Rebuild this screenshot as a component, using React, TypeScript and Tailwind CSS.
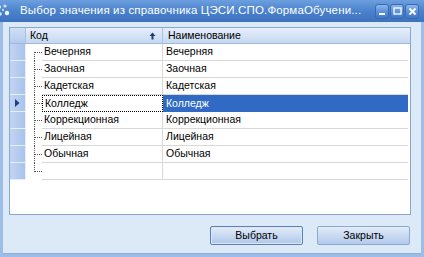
import React from "react";

const rows = [
  "Вечерняя",
  "Заочная",
  "Кадетская",
  "Колледж",
  "Коррекционная",
  "Лицейная",
  "Обычная",
  "",
];

const SELECTED = 3;

function TitleIcon() {
  return (
    <svg width="16" height="16" viewBox="0 0 16 16" className="shrink-0">
      <circle cx="3" cy="4" r="2" fill="#e8f2ff" />
      <circle cx="9" cy="3" r="1.6" fill="#cfe2fb" />
      <circle cx="4" cy="11" r="1.8" fill="#d9e9fd" />
      <circle cx="11" cy="10" r="2.2" fill="#f3f8ff" />
      <circle cx="7" cy="7" r="1.2" fill="#b9d3f5" />
    </svg>
  );
}

function WinButton({ kind }: { kind: "min" | "max" | "close" }) {
  return (
    <div className="flex h-[15px] w-[14px] items-center justify-center rounded-[3px] border border-[#3a69b0] bg-gradient-to-b from-[#8cb7ec] via-[#5d93db] to-[#3f76c6]">
      <svg width="9" height="9" viewBox="0 0 9 9">
        {kind === "min" && <rect x="1" y="6" width="6" height="2" fill="#fff" />}
        {kind === "max" && (
          <rect x="1" y="1" width="7" height="6" fill="none" stroke="#fff" strokeWidth="1.3" />
        )}
        {kind === "close" && (
          <path d="M1.5 1.5 L7.5 7.5 M7.5 1.5 L1.5 7.5" stroke="#fff" strokeWidth="1.8" />
        )}
      </svg>
    </div>
  );
}

export default function App() {
  return (
    <div
      className="flex h-[257px] w-[424px] flex-col overflow-hidden bg-[#2f5e9f] text-[10.5px] text-black"
      style={{ fontFamily: "'Liberation Sans', Arial, sans-serif" }}
    >
      {/* title bar */}
      <div className="flex h-[22px] items-center bg-gradient-to-b from-[#6d9fe0] via-[#4b82cc] to-[#3c72bf] pr-[5px]">
        <div className="-ml-[4px] mr-[8px]">
          <TitleIcon />
        </div>
        <div className="min-w-0 flex-1 whitespace-nowrap text-[11.5px] tracking-[0.15px] text-white">
          Выбор значения из справочника ЦЭСИ.СПО.ФормаОбучени...
        </div>
        <div className="ml-[4px] flex gap-[1px]">
          <WinButton kind="min" />
          <WinButton kind="max" />
          <WinButton kind="close" />
        </div>
      </div>

      {/* body */}
      <div className="flex flex-1 flex-col border-l-[3px] border-r-[3px] border-b-[3px] border-[#9dbde6] bg-[#dce9f7]">
        <div className="flex flex-1 flex-col border-b border-[#8fb0dc] pl-[6px] pr-[10px] pt-[5px]">
          {/* grid */}
          <div className="flex h-[188px] flex-col border border-[#8aa7cf] bg-white">
            {/* header */}
            <div className="flex h-[16px] border-b border-[#9fb9dc] bg-gradient-to-b from-[#e6eefa] to-[#c6d9f1]">
              <div className="w-[16px] border-r border-[#a9c2e3] bg-gradient-to-b from-[#d0e0f5] to-[#b3cbed]" />
              <div className="flex w-[137px] items-center justify-between border-r border-[#a9c2e3] pl-[4px] pr-[6px]">
                <span>Код</span>
                <svg width="7" height="8" viewBox="0 0 7 8">
                  <path d="M3.5 0.5 L6.5 4 L4.5 4 L4.5 7.5 L2.5 7.5 L2.5 4 L0.5 4 Z" fill="#1f3f72" />
                </svg>
              </div>
              <div className="flex flex-1 items-center pl-[5px]">Наименование</div>
            </div>

            {/* rows */}
            {rows.map((r, i) => {
              const sel = i === SELECTED;
              const first = i === 0;
              const last = i === rows.length - 1;
              return (
                <div key={i} className="flex h-[17px]">
                  <div className="flex w-[16px] items-center justify-center border-b border-r border-[#e6eefa] bg-gradient-to-r from-[#c0d5f1] to-[#a9c3ea]">
                    {sel && (
                      <svg width="5" height="8" viewBox="0 0 5 8">
                        <path d="M0 0 L4.5 4 L0 8 Z" fill="#1c3f86" />
                      </svg>
                    )}
                  </div>
                  {/* tree lines */}
                  <div className="relative w-[16px]">
                    <div
                      className={`absolute left-[8px] w-0 border-l border-dotted border-[#555] ${
                        first ? "top-[8px] bottom-0" : last ? "top-0 h-[9px]" : "top-0 bottom-0"
                      }`}
                    />
                    <div className="absolute left-[8px] top-[8px] w-[8px] border-t border-dotted border-[#555]" />
                  </div>
                  <div
                    className={`flex w-[121px] items-center pl-[2px] ${
                      sel ? "border border-dotted border-black" : "border-b border-r border-[#d8d8d8]"
                    }`}
                  >
                    {r}
                  </div>
                  <div
                    className={`mr-[2px] flex flex-1 items-center pl-[3px] ${
                      sel ? "bg-[#316ac5] text-white" : "border-b border-[#d8d8d8]"
                    }`}
                  >
                    {r}
                  </div>
                </div>
              );
            })}
            <div className="flex-1" />
          </div>

          {/* buttons */}
          <div className="mt-[11px] flex justify-end gap-[14px] pr-[1px]">
            <button className="h-[19px] w-[93px] rounded-[2px] border border-[#5b80b8] bg-gradient-to-b from-[#e3ecf9] via-[#c9daf2] to-[#aec7ea] text-[10.5px] text-black shadow-[inset_0_0_0_1px_#dbe7f7]">
              Выбрать
            </button>
            <button className="h-[19px] w-[93px] rounded-[2px] border border-[#8aa8d2] bg-gradient-to-b from-[#e3ecf9] via-[#c9daf2] to-[#b4cbec] text-[10.5px] text-black">
              Закрыть
            </button>
          </div>
        </div>
      </div>
    </div>
  );
}
